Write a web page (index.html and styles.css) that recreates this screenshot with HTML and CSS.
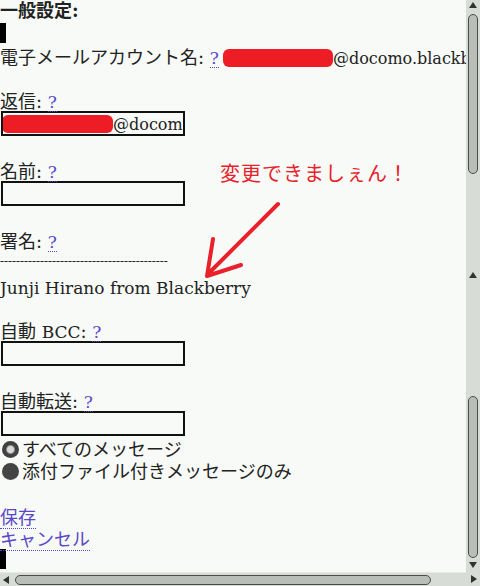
FILE: index.html
```html
<!DOCTYPE html>
<html>
<head>
    <title>一般設定</title>
    <meta name="viewport" content="width=device-width, initial-scale=1.0">
    <link rel="stylesheet" href="styles.css">
</head>
<body>
    <div class="screen">
        <main class="content">
            <h1 class="title">一般設定:</h1>
            <div class="caret"></div>

            <div class="row">電子メールアカウント名: <a class="help" href="#">?</a><span class="redact redact-name"></span><span class="latin small">@docomo.blackberry.ne.jp</span></div>
            <div class="blank"></div>

            <div class="row">返信: <a class="help" href="#">?</a></div>
            <div class="field"><span class="redact redact-reply"></span><span class="latin small">@docom</span></div>
            <div class="blank"></div>

            <div class="row">名前: <a class="help" href="#">?</a></div>
            <div class="field"></div>
            <div class="blank"></div>

            <div class="row">署名: <a class="help" href="#">?</a></div>
            <div class="rule">------------------------------------------</div>
            <div class="row"><span class="latin">Junji Hirano from Blackberry</span></div>
            <div class="blank"></div>

            <div class="row">自動 <span class="latin">BCC</span>: <a class="help" href="#">?</a></div>
            <div class="field"></div>
            <div class="blank"></div>

            <div class="row">自動転送: <a class="help" href="#">?</a></div>
            <div class="field"></div>
            <div class="row radio-row"><span class="radio checked"></span>すべてのメッセージ</div>
            <div class="row radio-row"><span class="radio"></span>添付ファイル付きメッセージのみ</div>
            <div class="blank tall"></div>

            <div class="row"><a class="action" href="#">保存</a></div>
            <div class="row"><a class="action" href="#">キャンセル</a></div>
            <div class="caret"></div>

            <!-- 手書きの注釈 -->
            <div class="note">変更できましぇん！</div>
            <svg class="note-arrow" width="100" height="90" viewBox="195 195 100 90">
                <path d="M278 204 L208 274 M213 239 L207 276 L241 265" fill="none" stroke="#e8212b" stroke-width="4" stroke-linecap="round" stroke-linejoin="round"/>
            </svg>
        </main>

        <aside class="vscroll">
            <div class="arrow up"></div>
            <div class="thumb thumb-top"></div>
            <div class="track" style="height: 90px"></div>
            <div class="arrow up mid"></div>
            <div class="track" style="height: 114px"></div>
            <div class="thumb thumb-bottom"></div>
            <div class="arrow down"></div>
        </aside>

        <div class="hscroll">
            <div class="arrow left"></div>
            <div class="hthumb"></div>
        </div>
        <div class="corner">
            <div class="arrow right"></div>
        </div>
    </div>
</body>
</html>
```

FILE: styles.css
```css
:root {
    --page-bg: #f7faf6;
    --bar-bg: #d8dcd6;
    --thumb-bg: #babeb8;
    --thumb-border: #4a4c4a;
    --link-color: #5a48c8;
    --note-color: #e8212b;
    --line: 22px;
}

* {
    box-sizing: border-box;
}

html, body {
    margin: 0;
    padding: 0;
}

body {
    width: 480px;
    height: 586px;
    overflow: hidden;
    background-color: var(--page-bg);
    color: #222;
    font-family: "DejaVu Serif", "Noto Sans CJK JP", serif;
    font-size: 18px;
}

.screen {
    display: grid;
    grid-template-columns: 466px 14px;
    grid-template-rows: 572px 14px;
    width: 480px;
    height: 586px;
}

.content {
    position: relative;
    overflow: hidden;
    line-height: var(--line);
}

.latin {
    font-family: "DejaVu Serif", serif;
    font-size: 17px;
    font-weight: 300;
}

.latin.small {
    font-size: 16px;
}

.title {
    margin: 0;
    font-size: 18px;
    font-weight: bold;
    line-height: var(--line);
}

.caret {
    width: 6px;
    height: 20px;
    margin: 1px 0;
    background-color: #000;
}

.row {
    height: var(--line);
    line-height: 28px;
    white-space: nowrap;
}

.blank {
    height: var(--line);
}

.blank.tall {
    height: 24px;
}

.help {
    color: var(--link-color);
    font-size: 17px;
    text-decoration: none;
    border-bottom: 1px dotted var(--link-color);
    line-height: 17px;
    display: inline-block;
}

.redact {
    display: inline-block;
    height: 18px;
    vertical-align: -3px;
    background-color: #ee1c25;
    border-radius: 6px;
}

.redact-name {
    width: 110px;
    margin-left: 4px;
}

.redact-reply {
    width: 111px;
    margin-left: -1px;
}

.field {
    width: 184px;
    height: 25px;
    margin: 1px 0 0 1px;
    border: 2px solid #111;
    background-color: var(--page-bg);
    line-height: 21px;
    white-space: nowrap;
    overflow: hidden;
}

.rule {
    height: 24px;
    font-family: "Liberation Serif", serif;
    font-size: 12px;
    line-height: 22px;
    white-space: nowrap;
}

.radio-row {
    display: flex;
    align-items: center;
    gap: 3px;
    padding-top: 5px;
}

.radio {
    width: 17px;
    height: 17px;
    margin-left: 2px;
    border-radius: 50%;
    background-color: #444;
    flex-shrink: 0;
}

.radio.checked {
    background: radial-gradient(circle, #d8d8d8 0 3px, #909090 4px, #404040 5px);
}

.action {
    color: var(--link-color);
    text-decoration: none;
    border-bottom: 1px dotted var(--link-color);
    line-height: 20px;
    display: inline-block;
}

/* 注釈 */
.note {
    position: absolute;
    left: 220px;
    top: 160px;
    font-family: "Noto Sans CJK JP", sans-serif;
    font-size: 20px;
    line-height: 26px;
    color: var(--note-color);
    letter-spacing: 1px;
}

.note-arrow {
    position: absolute;
    left: 195px;
    top: 195px;
}

/* スクロールバー */
.vscroll {
    display: flex;
    flex-direction: column;
    align-items: center;
    background-color: var(--bar-bg);
}

.arrow {
    width: 14px;
    height: 14px;
    flex-shrink: 0;
    position: relative;
}

.arrow::after {
    content: "";
    position: absolute;
    left: 3px;
    top: 4px;
    border: 4px solid transparent;
}

.arrow.up::after {
    top: 2px;
    border-bottom: 6px solid #333;
    border-top-width: 0;
}

.arrow.mid {
    height: 16px;
    margin-top: 2px;
}

.arrow.mid::after {
    top: 6px;
}

.arrow.down::after {
    top: 4px;
    border-top: 6px solid #333;
    border-bottom-width: 0;
}

.arrow.left::after {
    left: 3px;
    top: 3px;
    border-right: 6px solid #333;
    border-left-width: 0;
}

.arrow.right::after {
    left: 5px;
    top: 3px;
    border-left: 6px solid #333;
    border-right-width: 0;
}

.thumb {
    width: 10px;
    flex-shrink: 0;
    background-color: var(--thumb-bg);
    border: 1px solid var(--thumb-border);
    border-radius: 5px;
}

.thumb-top {
    height: 160px;
}

.thumb-bottom {
    height: 162px;
}

.track {
    flex-shrink: 0;
}

.hscroll {
    display: flex;
    align-items: center;
    background-color: var(--bar-bg);
    border-top: 1px solid #e6e9e4;
}

.hthumb {
    width: 416px;
    height: 10px;
    margin-left: 1px;
    background-color: var(--thumb-bg);
    border: 1px solid var(--thumb-border);
    border-radius: 5px;
}

.corner {
    background-color: var(--bar-bg);
}
```
